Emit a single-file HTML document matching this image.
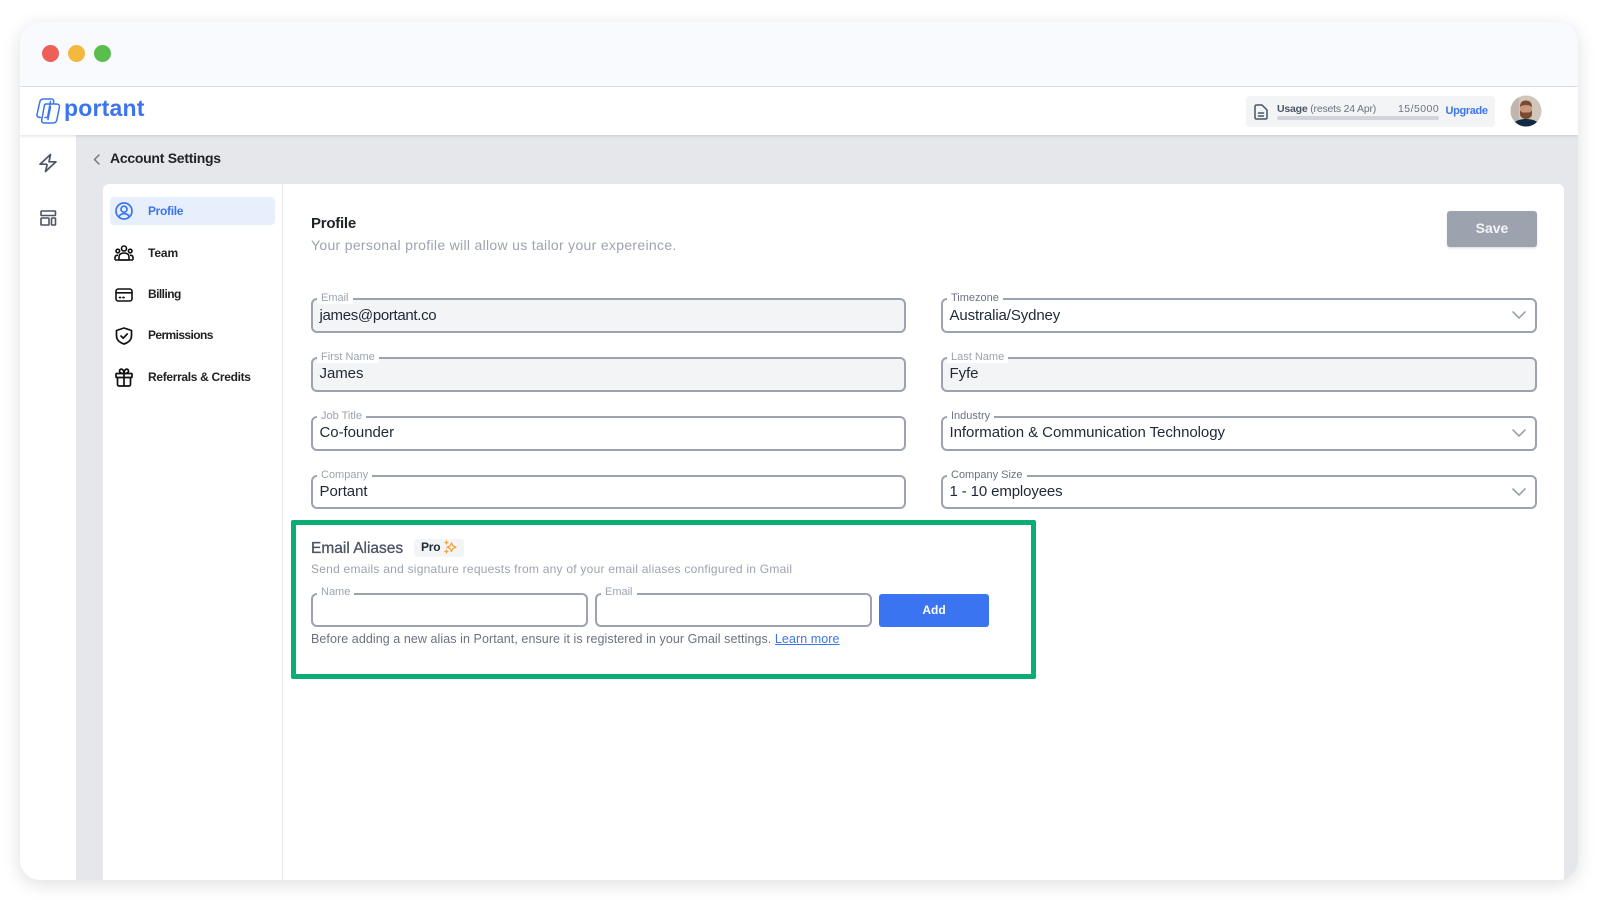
<!DOCTYPE html>
<html><head><meta charset="utf-8"><style>
html,body{margin:0;padding:0;width:1600px;height:900px;overflow:hidden;background:#fff;font-family:"Liberation Sans",sans-serif}
.a{position:absolute}
.t{position:absolute;white-space:nowrap;line-height:1}
#win{position:absolute;left:20px;top:22px;width:1558px;height:858px;border-radius:20px;overflow:hidden;box-shadow:0 4px 18px rgba(0,0,0,.13);background:#e5e7eb}
.f{position:absolute;box-sizing:border-box;height:35px;border:2px solid #9ca3af;border-radius:6px;background:#fff}
.g{background:#f3f4f6}
.l{position:absolute;white-space:nowrap;line-height:12px;height:12px;font-size:11px;color:#9ca3af;background:#fff;padding:0 4px}
.d{color:#6b7280}
.v{position:absolute;white-space:nowrap;line-height:1;font-size:15px;color:#1f2937;letter-spacing:-.05px}
svg{position:absolute;overflow:visible}
.n{font-size:12px;font-weight:bold;color:#222;letter-spacing:-.32px}
</style></head><body>
<div id="win">
<div class="a" style="left:0;top:0;width:1558px;height:64px;background:#f9fafe;border-bottom:1px solid #e0e1e5"></div>
<div class="a" style="left:0;top:65px;width:1558px;height:48px;background:#fff;box-shadow:0 1px 3px rgba(0,0,0,.13);z-index:2"></div>
<div class="a" style="left:0;top:113px;width:56px;height:745px;background:#fff"></div>
<div class="a" style="left:83px;top:162px;width:1461px;height:696px;background:#fff;border-radius:6px 6px 0 0"></div>
<div class="a" style="left:262px;top:162px;width:1px;height:696px;background:#e5e7eb"></div>
</div>

<div class="a" style="left:42px;top:45px;width:17px;height:17px;border-radius:50%;background:#ee5f57"></div>
<div class="a" style="left:68px;top:45px;width:17px;height:17px;border-radius:50%;background:#f5b83f"></div>
<div class="a" style="left:94px;top:45px;width:17px;height:17px;border-radius:50%;background:#5bbd4e"></div>

<div style="position:absolute;left:0;top:0;z-index:5;width:1600px;height:900px">
<svg style="left:36px;top:98px" width="25" height="26" viewBox="0 0 25 26" fill="none" stroke="#3b74f0" stroke-width="1.500" stroke-linejoin="round" stroke-linecap="round"><path d="M4.500 19.500C2 19.500 .7 18.500 1 16.500L3.800 4C4.200 2 5.500 1 7.500 1H15c2 0 3 1 2.700 3l-.3 1.500"/><path d="M9.500 6H20.500c2 0 3.200 1 2.900 3L20.800 22c-.4 2-1.800 3-3.800 3H8.500C6.500 25 5.300 24 5.700 22L8.300 8C8.500 6.800 9 6.200 9.500 6z"/><path d="M14.500 3.500 11.500 19.500M11.500 19.500H9M14.500 9 12 21.500"/></svg>
<div class="t" style="left:64px;top:94.500px;font-size:23px;font-weight:bold;color:#3b74f0;letter-spacing:.2px;line-height:26px">portant</div>

<div class="a" style="left:1246px;top:96px;width:249px;height:31px;border-radius:4px;background:#f3f4f6"></div>
<svg style="left:1254px;top:104px" width="14" height="16" viewBox="0 0 14 16" fill="none" stroke="#4b5563" stroke-width="1.500" stroke-linejoin="round"><path d="M2.500 1h5.500l5 5v7.500c0 .9-.6 1.500-1.500 1.500h-9c-.9 0-1.500-.6-1.500-1.500v-11C1 1.600 1.600 1 2.500 1z"/><path d="M4.500 9h5M4.500 12h5" stroke-linecap="round"/></svg>
<div class="t" style="left:1277px;top:104px;font-size:10.500px;color:#6b7280;letter-spacing:-.2px"><b style="color:#4b5563">Usage</b> (resets 24 Apr)</div>
<div class="t" style="left:1398px;top:103.500px;font-size:10.500px;color:#6b7280;letter-spacing:.45px">15/5000</div>
<div class="a" style="left:1277px;top:116px;width:162px;height:3.500px;border-radius:2px;background:#d1d5db"></div>
<div class="t" style="left:1445.500px;top:106px;font-size:11px;font-weight:bold;color:#3b74f0;letter-spacing:-.35px">Upgrade</div>
<svg style="left:1509px;top:94px" width="34" height="34" viewBox="0 0 34 34"><defs><clipPath id="c"><circle cx="17" cy="17" r="15.500"/></clipPath></defs><circle cx="17" cy="17" r="16.500" fill="#fff"/><g clip-path="url(#c)"><rect width="34" height="34" fill="#d0c6ba"/><rect x="0" y="0" width="10" height="34" fill="#c0b6ae"/><ellipse cx="17" cy="15" rx="6" ry="7.500" fill="#c9987c"/><path d="M11 16c1 2 2 2.500 3 2.500h6c1 0 2-.5 3-2.500v4c0 3-3 5-6 5s-6-2-6-5z" fill="#7a4a30"/><path d="M11 13c0-5 3-6.500 6-6.500s6 1.500 6 6.500c-2-2.500-10-2.500-12 0z" fill="#7a4a30"/><path d="M3 34c0-6 6-9 14-9s14 3 14 9z" fill="#0f2a44"/></g></svg>

<svg style="left:38px;top:153px" width="20" height="20" viewBox="0 0 20 20" fill="none" stroke="#4b5563" stroke-width="1.700" stroke-linejoin="round" stroke-linecap="round"><path d="M12.500 1.500 2 11.200h6.200M11 8.800h7L7.500 18.500l1.600-6.700M12.500 1.500l-1.500 7.300"/></svg>
<svg style="left:40px;top:210px" width="16" height="16" viewBox="0 0 16 16" fill="none" stroke="#4b5563" stroke-width="1.600" stroke-linejoin="round"><rect x="1" y="1" width="14.500" height="4.500" rx=".8"/><rect x="1" y="8" width="8" height="7" rx=".8"/><rect x="11.500" y="8" width="4" height="7" rx=".8"/></svg>
<svg style="left:92.500px;top:154px" width="8" height="11" viewBox="0 0 8 11" fill="none" stroke="#6b7280" stroke-width="1.400" stroke-linecap="round" stroke-linejoin="round"><path d="M6 1 1.500 5.500 6 10"/></svg>
<div class="t" style="left:110px;top:151px;font-size:14px;font-weight:bold;color:#1f2328;letter-spacing:-.27px">Account Settings</div>

<div class="a" style="left:110px;top:197px;width:165px;height:28px;border-radius:4px;background:#e8effc"></div>
<svg style="left:115px;top:202px" width="18" height="18" viewBox="0 0 18 18" fill="none" stroke="#3b74f0" stroke-width="1.700" stroke-linecap="round"><circle cx="9" cy="9" r="8"/><circle cx="9" cy="7.200" r="3"/><path d="M3.800 15c1-2.500 3-3.300 5.200-3.300s4.200.8 5.200 3.300"/></svg>
<div class="t n" style="left:148px;top:205px;color:#3b74f0">Profile</div>

<svg style="left:114px;top:245px" width="20" height="16" viewBox="0 0 20 16" fill="none" stroke="#111" stroke-width="1.600" stroke-linejoin="round"><circle cx="10" cy="3.500" r="2.500"/><circle cx="3.800" cy="6" r="1.800"/><circle cx="16.200" cy="6" r="1.800"/><path d="M5 15v-3.500c0-2 2-3.500 5-3.500s5 1.500 5 3.500V15z"/><path d="M1 15v-2.500c0-1.300 1-2.200 3-2.300M19 15v-2.500c0-1.300-1-2.200-3-2.300M1 15h18"/></svg>
<div class="t n" style="left:148px;top:246.500px;letter-spacing:-.1px">Team</div>

<svg style="left:115px;top:288px" width="18" height="14" viewBox="0 0 18 14" fill="none" stroke="#111" stroke-width="1.600" stroke-linecap="round"><rect x="1" y="1" width="16" height="12" rx="2.200"/><path d="M1 4.800h16"/><path d="M4.500 9.500h1M8 9.500h1" stroke-width="1.800"/></svg>
<div class="t n" style="left:148px;top:288px;letter-spacing:-.55px">Billing</div>

<svg style="left:115px;top:327px" width="18" height="18" viewBox="0 0 18 18" fill="none" stroke="#111" stroke-width="1.700" stroke-linecap="round" stroke-linejoin="round"><path d="M9 1 16.500 3.500V9c0 4-3.500 6.800-7.500 8C5 15.800 1.500 13 1.500 9V3.500z"/><path d="M6 9l2.200 2.200L12.200 7"/></svg>
<div class="t n" style="left:148px;top:329px;letter-spacing:-.6px">Permissions</div>

<svg style="left:115px;top:368px" width="18" height="19" viewBox="0 0 18 19" fill="none" stroke="#111" stroke-width="1.700" stroke-linecap="round" stroke-linejoin="round"><rect x="1" y="5.500" width="16" height="4" rx=".8"/><path d="M2.500 9.500V16.500c0 .8.600 1.500 1.500 1.500h10c.9 0 1.500-.7 1.500-1.500V9.500M9 5.500V18"/><path d="M9 5.500C7 5.500 4.500 5 4.500 3 4.500 1.500 6 .8 7 1.300 8.300 2 9 4 9 5.500zM9 5.500c2 0 4.500-.5 4.500-2.500 0-1.500-1.500-2.200-2.500-1.700C9.700 2 9 4 9 5.500z"/></svg>
<div class="t n" style="left:148px;top:371px">Referrals &amp; Credits</div>

<div class="t" style="left:311px;top:215.500px;font-size:15px;font-weight:bold;color:#1f2328;letter-spacing:-.25px">Profile</div>
<div class="t" style="left:311px;top:238px;font-size:14px;color:#9ca3af;letter-spacing:.31px">Your personal profile will allow us tailor your expereince.</div>
<div class="a" style="left:1447px;top:211px;width:90px;height:36px;border-radius:3px;background:#9ca3af;box-shadow:0 1px 2px rgba(0,0,0,.15)"></div>
<div class="t" style="left:1447px;width:90px;text-align:center;top:221px;font-size:14px;font-weight:bold;color:#f3f4f6">Save</div>

<div class="f g" style="left:311px;top:298px;width:595px"></div>
<div class="l" style="left:317px;top:292px">Email</div>
<div class="v" style="left:319.500px;top:307.500px;letter-spacing:-.32px">james@portant.co</div>

<div class="f g" style="left:311px;top:357px;width:595px"></div>
<div class="l" style="left:317px;top:351px">First Name</div>
<div class="v" style="left:319.500px;top:366px">James</div>

<div class="f" style="left:311px;top:416px;width:595px"></div>
<div class="l" style="left:317px;top:410px">Job Title</div>
<div class="v" style="left:319.500px;top:425px">Co-founder</div>

<div class="f" style="left:311px;top:475px;width:595px;height:34px"></div>
<div class="l" style="left:317px;top:469px">Company</div>
<div class="v" style="left:319.500px;top:484px">Portant</div>

<div class="f" style="left:941px;top:298px;width:596px"></div>
<div class="l d" style="left:947px;top:292px">Timezone</div>
<div class="v" style="left:949.500px;top:307.500px;letter-spacing:-.12px">Australia/Sydney</div>

<div class="f g" style="left:941px;top:357px;width:596px"></div>
<div class="l" style="left:947px;top:351px">Last Name</div>
<div class="v" style="left:949.500px;top:366px">Fyfe</div>

<div class="f" style="left:941px;top:416px;width:596px"></div>
<div class="l d" style="left:947px;top:410px">Industry</div>
<div class="v" style="left:949.500px;top:425px">Information &amp; Communication Technology</div>

<div class="f" style="left:941px;top:475px;width:596px;height:34px"></div>
<div class="l d" style="left:947px;top:469px">Company Size</div>
<div class="v" style="left:949.500px;top:484px;letter-spacing:-.13px">1 - 10 employees</div>

<svg style="left:1512px;top:310px" width="14" height="10" viewBox="0 0 14 10" fill="none" stroke="#9ca3af" stroke-width="1.600" stroke-linecap="round" stroke-linejoin="round"><path d="M1 2l6 6 6-6"/></svg>
<svg style="left:1512px;top:428px" width="14" height="10" viewBox="0 0 14 10" fill="none" stroke="#9ca3af" stroke-width="1.600" stroke-linecap="round" stroke-linejoin="round"><path d="M1 2l6 6 6-6"/></svg>
<svg style="left:1512px;top:487px" width="14" height="10" viewBox="0 0 14 10" fill="none" stroke="#9ca3af" stroke-width="1.600" stroke-linecap="round" stroke-linejoin="round"><path d="M1 2l6 6 6-6"/></svg>

<div class="a" style="left:291px;top:520px;width:735px;height:149px;border:5px solid #0aae72;border-radius:2px"></div>
<div class="t" style="left:311px;top:540.500px;font-size:15.500px;color:#4b5563;-webkit-text-stroke:.3px #4b5563">Email Aliases</div>
<div class="a" style="left:414px;top:539px;width:50px;height:18px;border-radius:3px;background:#f3f4f6"></div>
<div class="t" style="left:421px;top:541px;font-size:12px;font-weight:bold;color:#1f2937;letter-spacing:-.2px">Pro</div>
<svg style="left:444px;top:540px" width="13" height="14" viewBox="0 0 13 14" fill="none" stroke="#f0a43a" stroke-width="1.300" stroke-linejoin="round"><path d="M7.500 3 9 6l3 1.200-3 1.300-1.500 3-1.500-3-3-1.300L6 6z"/><path d="M2.500 1v3M1 2.500h3M2.500 10v3M1 11.500h3" stroke-linecap="round"/></svg>
<div class="t" style="left:311px;top:563px;font-size:12px;color:#9ca3af;letter-spacing:.24px">Send emails and signature requests from any of your email aliases configured in Gmail</div>

<div class="f" style="left:311px;top:593px;width:277px;height:34px"></div>
<div class="l" style="left:317px;top:586px">Name</div>
<div class="f" style="left:595px;top:593px;width:277px;height:34px"></div>
<div class="l" style="left:601px;top:586px">Email</div>
<div class="a" style="left:879px;top:594px;width:110px;height:33px;border-radius:3px;background:#3b74f0"></div>
<div class="t" style="left:879px;width:110px;text-align:center;top:604px;font-size:12px;font-weight:bold;color:#fff">Add</div>
<div class="t" style="left:311px;top:632.500px;font-size:12.500px;color:#6b7280;letter-spacing:.07px">Before adding a new alias in Portant, ensure it is registered in your Gmail settings. <span style="color:#3b74f0;text-decoration:underline">Learn more</span></div>
</div>
</body></html>
